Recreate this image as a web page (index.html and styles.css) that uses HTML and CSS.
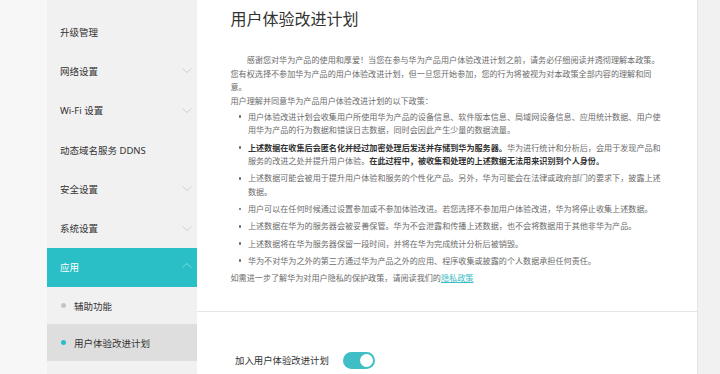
FILE: index.html
```html
<!DOCTYPE html>
<html lang="zh-CN">
<head>
    <meta charset="UTF-8">
    <meta name="viewport" content="width=device-width, initial-scale=1.0">
    <title>用户体验改进计划</title>
    <link rel="stylesheet" href="styles.css">
</head>
<body>
    <div class="page">
        <div class="gutter"></div>
        <nav class="sidebar">
            <div class="nav-item">升级管理</div>
            <div class="nav-item">网络设置
                <svg class="chevron" viewBox="0 0 10 5"><polyline points="0.5,0.5 5,4.5 9.5,0.5"/></svg>
            </div>
            <div class="nav-item">Wi-Fi 设置
                <svg class="chevron" viewBox="0 0 10 5"><polyline points="0.5,0.5 5,4.5 9.5,0.5"/></svg>
            </div>
            <div class="nav-item">动态域名服务 DDNS</div>
            <div class="nav-item">安全设置
                <svg class="chevron" viewBox="0 0 10 5"><polyline points="0.5,0.5 5,4.5 9.5,0.5"/></svg>
            </div>
            <div class="nav-item">系统设置
                <svg class="chevron" viewBox="0 0 10 5"><polyline points="0.5,0.5 5,4.5 9.5,0.5"/></svg>
            </div>
            <div class="nav-item active">应用
                <svg class="chevron" viewBox="0 0 10 5"><polyline points="0.5,4.5 5,0.5 9.5,4.5"/></svg>
            </div>
            <div class="sub-item"><span class="dot"></span>辅助功能</div>
            <div class="sub-item current"><span class="dot"></span>用户体验改进计划</div>
        </nav>
        <main class="main">
            <section class="card policy">
                <h1 class="title">用户体验改进计划</h1>
                <p class="intro">感谢您对华为产品的使用和厚爱！当您在参与华为产品用户体验改进计划之前，请务必仔细阅读并透彻理解本政策。您有权选择不参加华为产品的用户体验改进计划，但一旦您开始参加，您的行为将被视为对本政策全部内容的理解和同意。</p>
                <p class="lead">用户理解并同意华为产品用户体验改进计划的以下政策：</p>
                <ul class="rules">
                    <li>用户体验改进计划会收集用户所使用华为产品的设备信息、软件版本信息、局域网设备信息、应用统计数据、用户使用华为产品的行为数据和错误日志数据，同时会因此产生少量的数据流量。</li>
                    <li><b>上述数据在收集后会匿名化并经过加密处理后发送并存储到华为服务器。</b>华为进行统计和分析后，会用于发现产品和服务的改进之处并提升用户体验。<b>在此过程中，被收集和处理的上述数据无法用来识别到个人身份。</b></li>
                    <li>上述数据可能会被用于提升用户体验和服务的个性化产品。另外，华为可能会在法律或政府部门的要求下，披露上述数据。</li>
                    <li>用户可以在任何时候通过设置参加或不参加体验改进。若您选择不参加用户体验改进，华为将停止收集上述数据。</li>
                    <li>上述数据在华为的服务器会被妥善保管。华为不会泄露和传播上述数据，也不会将数据用于其他非华为产品。</li>
                    <li>上述数据将在华为服务器保留一段时间，并将在华为完成统计分析后被销毁。</li>
                    <li>华为不对华为之外的第三方通过华为产品之外的应用、程序收集或披露的个人数据承担任何责任。</li>
                </ul>
                <p class="lead">如需进一步了解华为对用户隐私的保护政策，请阅读我们的<a class="link" href="#">隐私政策</a></p>
            </section>
            <section class="card setting">
                <div class="toggle-row">
                    <span class="toggle-label">加入用户体验改进计划</span>
                    <span class="switch on"><span class="knob"></span></span>
                </div>
            </section>
        </main>
        <div class="gutter-right"></div>
    </div>
</body>
</html>
```

FILE: styles.css
```css
body {
    margin: 0;
    height: 374px;
    overflow: hidden;
    background-color: #f7f7f7;
    font-family: "Noto Sans", "Noto Sans CJK SC", sans-serif;
    color: #333;
}

.page {
    display: flex;
    height: 374px;
}

.gutter {
    width: 47px;
    flex-shrink: 0;
    background-color: #f7f7f7;
}

/* left menu */
.sidebar {
    width: 150px;
    flex-shrink: 0;
    background-color: #f1f1f1;
    padding-top: 12px;
    box-sizing: border-box;
}

.nav-item {
    height: 39.3px;
    display: flex;
    align-items: center;
    justify-content: space-between;
    padding: 0 5px 0 13px;
    font-size: 9.5px;
    color: #333;
}

.chevron {
    width: 10px;
    height: 5px;
    fill: none;
    stroke: #cfcfcf;
    stroke-width: 1;
}

.nav-item.active {
    background-color: #2abfc7;
    color: #fff;
}

.nav-item.active .chevron {
    stroke: #7ad8dd;
    margin-top: -3px;
}

.sub-item {
    height: 37px;
    display: flex;
    align-items: center;
    padding-left: 14px;
    font-size: 9.5px;
    color: #333;
}

.sub-item .dot {
    width: 5px;
    height: 5px;
    border-radius: 50%;
    background-color: #c4c4c4;
    margin-right: 8px;
}

.sub-item.current {
    background-color: #dedede;
}

.sub-item.current .dot {
    background-color: #2abfc7;
}

/* content */
.main {
    width: 500px;
    flex-shrink: 0;
    background-color: #fff;
    border-right: 1px solid #e3e3e3;
    display: flex;
    flex-direction: column;
}

.card {
    padding: 0 34px 0 33.5px;
}

.policy {
    padding-top: 8px;
    padding-bottom: 26px;
    border-bottom: 1px solid #e6e6e6;
}

.title {
    margin: 0 0 24px;
    font-size: 16px;
    line-height: 21px;
    font-weight: normal;
    color: #333;
    font-family: "Noto Sans CJK SC", sans-serif;
}

.intro,
.lead,
.rules {
    font-family: "Noto Sans CJK SC", sans-serif;
    font-size: 8.1px;
    line-height: 13.6px;
    color: #6b6b6b;
    width: 432px;
    margin: 0;
}

.intro {
    text-indent: 2em;
}

.rules b {
    color: #333;
}

.rules {
    list-style: none;
    padding: 0 0 0 17.4px;
    width: 414.6px;
    margin-top: 2.5px;
}

.rules li {
    position: relative;
    margin-bottom: 3.6px;
}

.rules li::before {
    content: "";
    position: absolute;
    left: -9px;
    top: 5.6px;
    width: 2.6px;
    height: 2.6px;
    border-radius: 50%;
    background-color: #666;
}

.link {
    color: #3cbcc4;
    text-decoration: underline;
}

.setting {
    flex: 1;
    padding-top: 40px;
}

.toggle-row {
    display: flex;
    align-items: center;
    padding-left: 4.5px;
}

.toggle-label {
    font-family: "Noto Sans CJK SC", sans-serif;
    font-size: 9.4px;
    color: #333;
    margin-right: 14px;
}

.switch {
    width: 32px;
    height: 17px;
    border-radius: 9px;
    background-color: #3fbfc5;
    display: flex;
    align-items: center;
    justify-content: flex-end;
    padding: 0 2px;
    box-sizing: border-box;
}

.knob {
    width: 13px;
    height: 13px;
    border-radius: 50%;
    background-color: #fff;
}

.gutter-right {
    flex: 1;
    background-color: #f1f1f1;
}
```
